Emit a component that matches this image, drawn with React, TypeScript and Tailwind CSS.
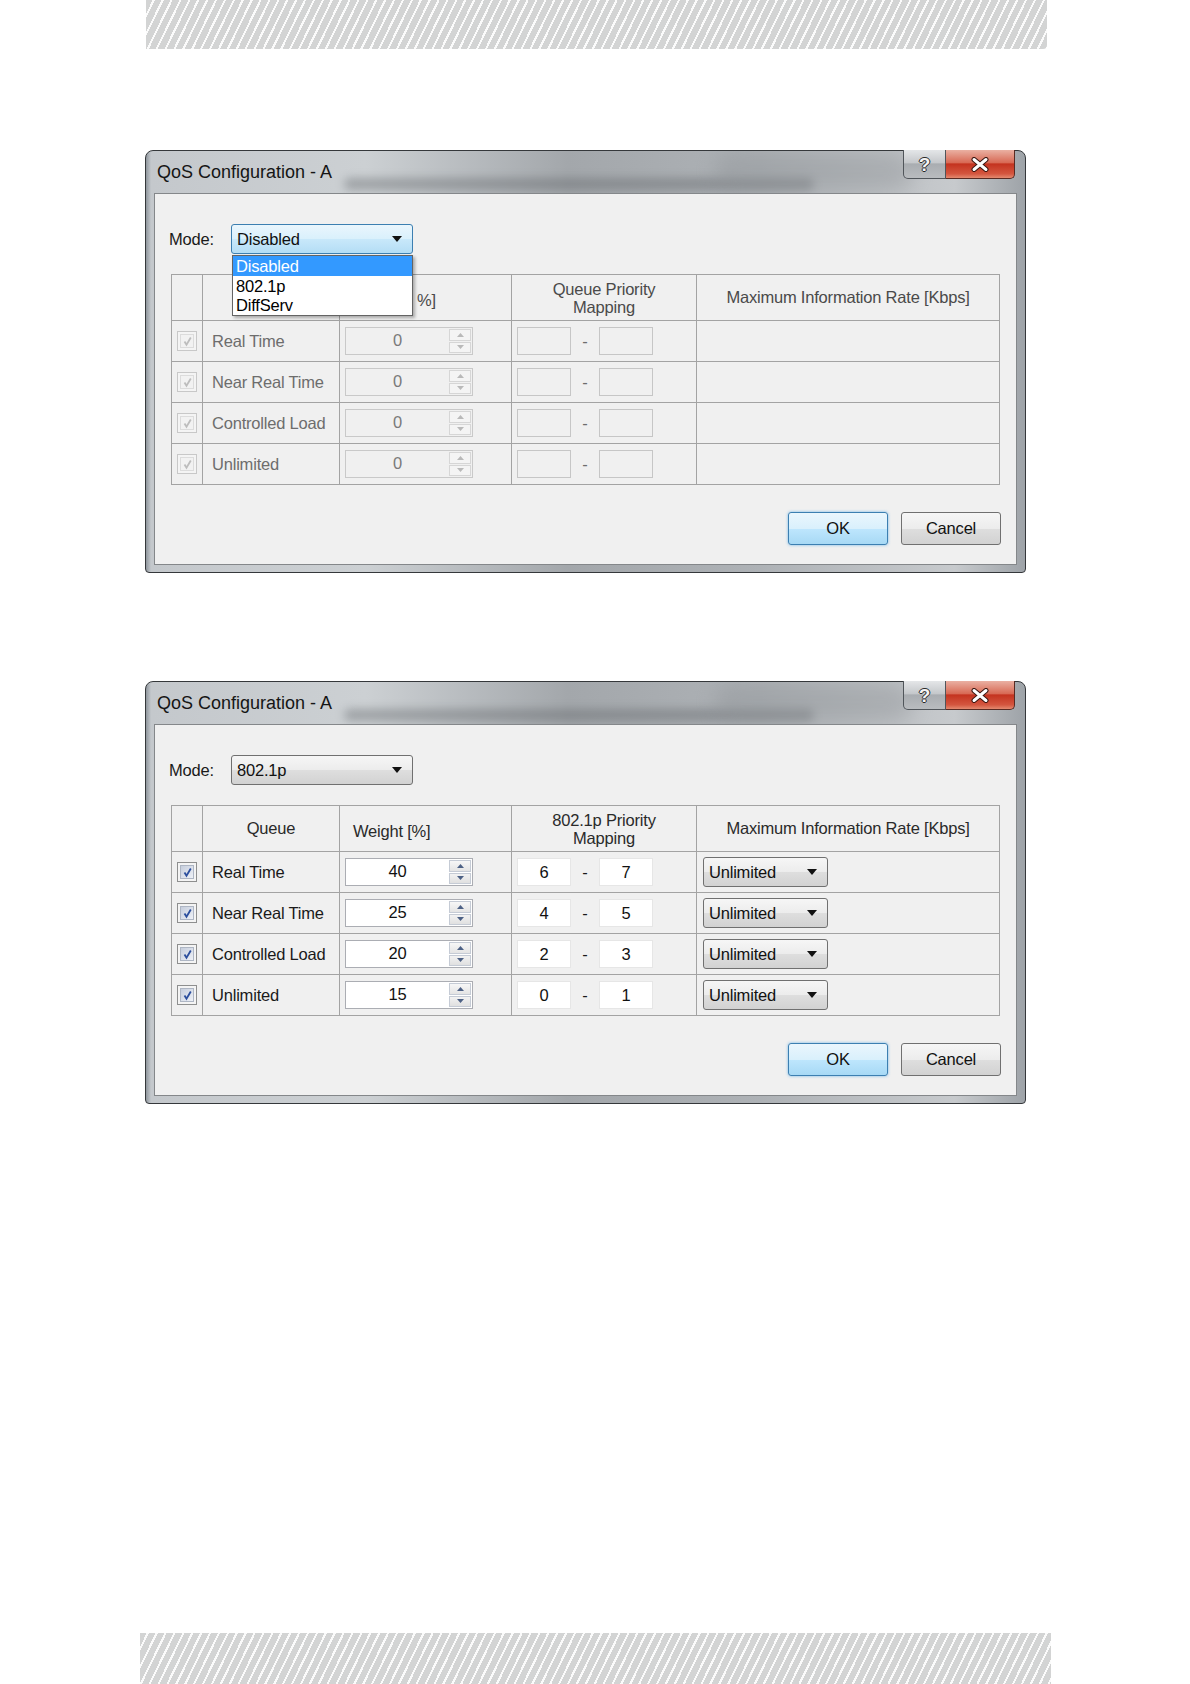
import React from 'react';

const UI = "[font-family:'Liberation_Sans',Arial,sans-serif]";

type Row = { name: string; weight: string; lo: string; hi: string };

const ROWS: Row[] = [
  { name: 'Real Time', weight: '40', lo: '6', hi: '7' },
  { name: 'Near Real Time', weight: '25', lo: '4', hi: '5' },
  { name: 'Controlled Load', weight: '20', lo: '2', hi: '3' },
  { name: 'Unlimited', weight: '15', lo: '0', hi: '1' },
];

function Stripe({ className }: { className: string }) {
  return (
    <div
      className={`[background-image:repeating-linear-gradient(116deg,#d3d4d4_0px,#d3d4d4_6px,#fbfbfb_6px,#fbfbfb_8px)] ${className}`}
    />
  );
}

function Caret() {
  return (
    <svg width="10" height="6" viewBox="0 0 10 6">
      <path d="M0 0h10L5 6z" fill="#111" />
    </svg>
  );
}

function Combo({ text, focused, wide }: { text: string; focused?: boolean; wide?: boolean }) {
  return (
    <div
      className={`flex h-[30px] items-center justify-between rounded-[3px] border pl-[5px] pr-[10px] text-[#111] ${
        wide ? 'w-[182px]' : 'w-[125px]'
      } ${
        focused
          ? 'border-[#3c7fb1] [background-image:linear-gradient(#eaf6fd,#d9f0fc_50%,#c8e8fa_51%,#b4ddf5)]'
          : 'border-[#707070] [background-image:linear-gradient(#f6f6f6,#ececec_50%,#dedede_51%,#d2d2d2)]'
      }`}
    >
      <span>{text}</span>
      <Caret />
    </div>
  );
}

function Check({ enabled }: { enabled: boolean }) {
  return (
    <div
      className={`flex h-[20px] w-[20px] items-center justify-center border ${
        enabled ? 'border-[#8e8f8f] bg-[#f4f4f4]' : 'border-[#c8c8c8] bg-[#f4f4f4]'
      }`}
    >
      <div
        className={`flex h-[14px] w-[14px] items-center justify-center border ${
          enabled
            ? 'border-[#aeb6c4] [background-image:linear-gradient(135deg,#c6cedd,#eef1f7)]'
            : 'border-[#dcdcdc] bg-[#f2f2f2]'
        }`}
      >
        <svg width="11" height="11" viewBox="0 0 11 11">
          <path
            d="M2.5 5.5 L4.5 8.8 L8.8 1.5"
            fill="none"
            stroke={enabled ? '#2c4f9e' : '#bdbdbd'}
            strokeWidth="1.8"
          />
        </svg>
      </div>
    </div>
  );
}

function Arrow({ up, enabled }: { up?: boolean; enabled: boolean }) {
  return (
    <svg width="7" height="4" viewBox="0 0 7 4">
      <path d={up ? 'M0 4h7L3.5 0z' : 'M0 0h7L3.5 4z'} fill={enabled ? '#4d6185' : '#b9b9b9'} />
    </svg>
  );
}

function Spin({ value, enabled }: { value: string; enabled: boolean }) {
  return (
    <div
      className={`flex h-[28px] w-[128px] border ${
        enabled ? 'border-[#abadb3] bg-white text-[#111]' : 'border-[#c9c9c9] bg-[#f0f0f0] text-[#7a7a7a]'
      }`}
    >
      <div className="flex-1 text-center leading-[24px]">{value}</div>
      <div className="my-[1px] mr-[1px] flex w-[22px] flex-col gap-[1px]">
        <div
          className={`flex flex-1 items-center justify-center border ${
            enabled ? 'border-[#c5cbd5] [background-image:linear-gradient(#f7f7f7,#e4e4e4)]' : 'border-[#d6d6d6] bg-[#f4f4f4]'
          }`}
        >
          <Arrow up enabled={enabled} />
        </div>
        <div
          className={`flex flex-1 items-center justify-center border ${
            enabled ? 'border-[#c5cbd5] [background-image:linear-gradient(#f2f2f2,#e0e0e0)]' : 'border-[#d6d6d6] bg-[#f4f4f4]'
          }`}
        >
          <Arrow enabled={enabled} />
        </div>
      </div>
    </div>
  );
}

function Box({ value, enabled }: { value: string; enabled: boolean }) {
  return (
    <div
      className={`h-[28px] w-[54px] border text-center leading-[26px] ${
        enabled ? 'border-[#e6e6e6] bg-white text-[#111]' : 'border-[#c6c6c6] bg-[#f0f0f0]'
      }`}
    >
      {value}
    </div>
  );
}

function Dialog({ enabled }: { enabled: boolean }) {
  const text = enabled ? 'text-[#1a1a1a]' : 'text-[#6d6d6d]';
  const head = enabled ? 'text-[#2a2a2a]' : 'text-[#4a4a4a]';
  const cell = 'border-r border-b border-[#a3a3a3]';

  return (
    <div className="relative ml-[145px] w-[881px] rounded-t-[8px] rounded-b-[4px] border border-[#35383b] px-[8px] pb-[7px] [background-image:linear-gradient(90deg,#8f969d_0px,#c4c8cc_5px,#ccd0d3_25%,#a3a7ab_48%,#aeb2b6_70%,#c7cacd_92%,#9ea3a8_100%)]">
      {/* title bar */}
      <div className="relative flex h-[42px] items-center overflow-hidden pl-[3px]">
        <div className="absolute left-[190px] top-[27px] h-[12px] w-[470px] rounded-full bg-[#5b5f63] opacity-40 blur-[5px]" />
        <div className="absolute left-[560px] top-[0px] h-[40px] w-[200px] rounded-full bg-[#8d9195] opacity-40 blur-[10px]" />
        <span className="relative text-[18px] text-[#151515]">QoS Configuration - A</span>
      </div>

      {/* caption buttons */}
      <div className="absolute right-[10px] top-[-1px] flex">
        <div className="flex h-[29px] w-[43px] items-center justify-center rounded-bl-[5px] border border-t-0 border-[#50555a] [background-image:linear-gradient(#e4e6e8,#c5c8cb_45%,#a9adb1_50%,#b9bcbf)]">
          <span className="text-[19px] font-bold leading-none text-[#f4f4f4] [text-shadow:1px_0_0_#2a2a2a,-1px_0_0_#2a2a2a,0_1px_0_#2a2a2a,0_-1px_0_#2a2a2a]">
            ?
          </span>
        </div>
        <div className="flex h-[29px] w-[69px] items-center justify-center rounded-br-[5px] border border-l-0 border-t-0 border-[#5a2a22] [background-image:linear-gradient(#eab0a2,#d86a55_45%,#c4331f_50%,#d4563f_85%,#e48a70)]">
          <svg width="20" height="15" viewBox="0 0 20 15">
            <path d="M4 2.5 L16 12.5 M16 2.5 L4 12.5" stroke="#3b1610" strokeWidth="5" strokeLinecap="round" />
            <path d="M4 2.5 L16 12.5 M16 2.5 L4 12.5" stroke="#ffffff" strokeWidth="3" strokeLinecap="round" />
          </svg>
        </div>
      </div>

      {/* client area */}
      <div className={`border border-[#84878a] bg-[#f0f0f0] px-[16px] pb-[19px] pt-[30px] text-[16.5px] tracking-[-0.2px] ${UI}`}>
        <div className="ml-[-2px] flex items-center">
          <span className="w-[62px] text-[#1a1a1a]">Mode:</span>
          <div className="relative">
            <Combo text={enabled ? '802.1p' : 'Disabled'} focused={!enabled} wide />
            {!enabled && (
              <div className="absolute left-[1px] top-[31px] z-10 w-[181px] border border-[#646464] bg-white shadow-[2px_2px_3px_rgba(0,0,0,0.3)]">
                <div className="h-[20px] bg-[#3399ff] pl-[3px] leading-[20px] text-white">Disabled</div>
                <div className="h-[20px] pl-[3px] leading-[20px] text-black">802.1p</div>
                <div className="h-[19px] pl-[3px] leading-[19px] text-black">DiffServ</div>
              </div>
            )}
          </div>
        </div>

        {/* table */}
        <div className="mt-[20px] grid grid-cols-[31px_137px_172px_185px_303px] grid-rows-[46px_41px_41px_41px_41px] border-l border-t border-[#a3a3a3]">
          <div className={cell} />
          <div className={`${cell} ${head} flex items-center justify-center`}>{enabled ? 'Queue' : ''}</div>
          <div className={`${cell} ${head} flex items-center pl-[13px] pt-[6px]`}>
            {enabled ? 'Weight [%]' : <span className="pl-[64px]">%]</span>}
          </div>
          <div className={`${cell} ${head} flex flex-col items-center justify-center leading-[18px]`}>
            <span>{enabled ? '802.1p Priority' : 'Queue Priority'}</span>
            <span>Mapping</span>
          </div>
          <div className={`${cell} ${head} flex items-center justify-center`}>Maximum Information Rate [Kbps]</div>

          {ROWS.map((r) => (
            <React.Fragment key={r.name}>
              <div className={`${cell} flex items-center justify-center`}>
                <Check enabled={enabled} />
              </div>
              <div className={`${cell} ${text} flex items-center pl-[9px]`}>{r.name}</div>
              <div className={`${cell} flex items-center pl-[5px]`}>
                <Spin value={enabled ? r.weight : '0'} enabled={enabled} />
              </div>
              <div className={`${cell} flex items-center pl-[5px]`}>
                <Box value={enabled ? r.lo : ''} enabled={enabled} />
                <span className={`w-[28px] text-center ${text}`}>-</span>
                <Box value={enabled ? r.hi : ''} enabled={enabled} />
              </div>
              <div className={`${cell} flex items-center pl-[6px]`}>{enabled && <Combo text="Unlimited" />}</div>
            </React.Fragment>
          ))}
        </div>

        {/* buttons */}
        <div className="mr-[-1px] mt-[27px] flex justify-end gap-[13px]">
          <div className="flex h-[33px] w-[100px] items-center justify-center rounded-[3px] border border-[#3c7fb1] text-[#111] shadow-[0_0_3px_rgba(60,160,230,0.7)] [background-image:linear-gradient(#eaf6fd,#d9f0fc_50%,#bee6fd_51%,#a7d9f5)]">
            OK
          </div>
          <div className="flex h-[33px] w-[100px] items-center justify-center rounded-[3px] border border-[#707070] text-[#111] [background-image:linear-gradient(#f6f6f6,#ececec_50%,#dedede_51%,#d2d2d2)]">
            Cancel
          </div>
        </div>
      </div>
    </div>
  );
}

export default function App() {
  return (
    <div className={`flex h-[1684px] w-[1190px] flex-col bg-white ${UI}`}>
      <Stripe className="ml-[146px] h-[49px] w-[901px] rounded-br-[4px]" />
      <div className="mt-[101px]">
        <Dialog enabled={false} />
      </div>
      <div className="mt-[108px]">
        <Dialog enabled />
      </div>
      <Stripe className="ml-[140px] mt-auto h-[51px] w-[911px]" />
    </div>
  );
}
